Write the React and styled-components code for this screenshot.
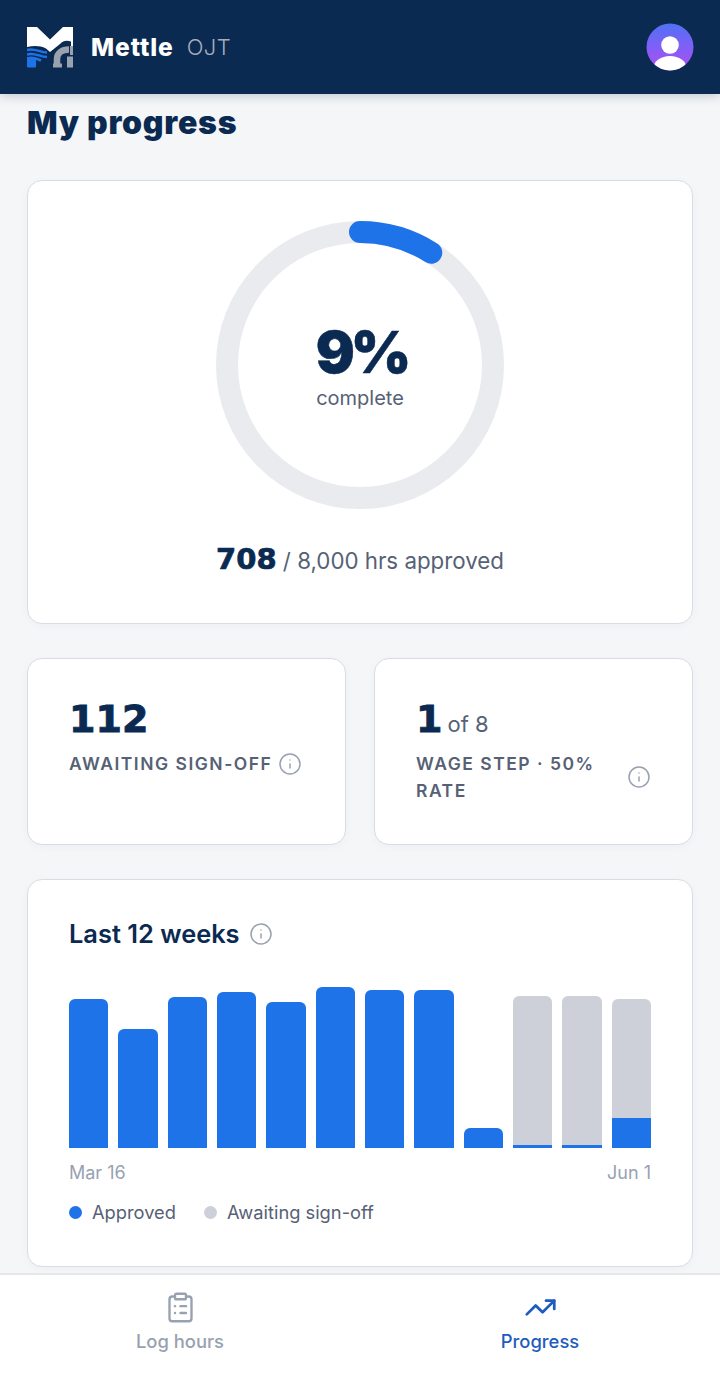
import React from 'react';
import styled, { createGlobalStyle } from 'styled-components';
import { ClipboardList, TrendingUp, Info } from 'lucide-react';

const Global = createGlobalStyle`
  html, body { margin: 0; padding: 0; background: #f6f7f9; }
  * { box-sizing: border-box; }
`;

const display = `"Inter", "Noto Sans", sans-serif`;
const numeric = `"DejaVu Sans", "Inter", sans-serif`;

const Page = styled.div`
  width: 720px; height: 1381px; display: flex; flex-direction: column; overflow: hidden;
  font-family: "Inter", sans-serif; background: #f5f6f8; color: #0b2a52;
`;
const Header = styled.header`
  height: 94px; flex: none; background: #0b2a52; display: flex; align-items: center;
  justify-content: space-between; padding: 0 26px 0 27px; box-shadow: 0 2px 10px rgba(11,42,82,.22);
  position: relative; z-index: 1;
`;
const Brand = styled.div`display: flex; align-items: center; gap: 18px;`;
const Wordmark = styled.span`font: 800 24.5px ${display}; color: #fff; letter-spacing: .9px;`;
const Product = styled.span`font: 300 22px "Inter", sans-serif; color: #a4adba; margin-left: -5px; letter-spacing: .4px;`;
const Main = styled.main`
  flex: 1; min-height: 0; overflow: hidden; padding: 9px 27px 0; display: flex; flex-direction: column;
`;
const Title = styled.h1`
  margin: 0 0 37px; font: 900 32px/40px ${display}; color: #0b2a52; letter-spacing: .75px;
`;
const Card = styled.section`
  background: #fff; border: 1px solid #d9dce2; border-radius: 15px;
  box-shadow: 0 2px 10px rgba(20,40,80,.03);
`;
const GaugeCard = styled(Card)`
  height: 444px; display: flex; flex-direction: column; align-items: center; padding-top: 40px; flex: none;
`;
const Gauge = styled.div`position: relative; width: 288px; height: 288px;`;
const GaugeCenter = styled.div`
  position: absolute; inset: 0; display: flex; flex-direction: column; align-items: center; justify-content: center;
`;
const Percent = styled.div`font: 900 58px/66px ${display}; color: #0b2a52; letter-spacing: -4px; margin-right: -3px; -webkit-text-stroke: .5px #0b2a52;`;
const Complete = styled.div`font: 400 20px/26px "Inter", sans-serif; color: #566176;`;
const Approved = styled.div`margin-top: 33px; font: 400 22.3px/34px "Inter", sans-serif; color: #566176;`;
const ApprovedNum = styled.strong`font: 700 29px/34px ${numeric}; color: #0b2a52; -webkit-text-stroke: .7px #0b2a52;`;
const StatRow = styled.div`display: grid; grid-template-columns: 1fr 1fr; gap: 28px; margin-top: 34px; flex: none;`;
const StatCard = styled(Card)`height: 187px; padding: 35px 41px;`;
const StatValue = styled.div`display: flex; align-items: baseline; gap: 5px;`;
const StatNumber = styled.span`font: 700 38px/50px ${numeric}; color: #0b2a52; -webkit-text-stroke: .9px #0b2a52;`;
const StatUnit = styled.span`font: 400 22px "Inter", sans-serif; color: #566176;`;
const StatLabel = styled.div`display: flex; align-items: center; gap: 6px; margin-top: 6px; color: #566176;`;
const LabelText = styled.span`font: 600 17.5px/27px "Inter", sans-serif; letter-spacing: 1.5px; flex: ${p => p.$grow ? 1 : 'none'};`;
const InfoIcon = styled(Info)`color: #98a1b1; flex: none;`;
const ChartCard = styled(Card)`height: 388px; margin-top: 34px; padding: 38px 41px 0; flex: none;`;
const ChartHead = styled.div`display: flex; align-items: center; gap: 9px;`;
const ChartTitle = styled.h2`margin: 0; font: 600 25.4px/32px "Inter", sans-serif; color: #0b2a52;`;
const Bars = styled.div`
  margin-top: 37px; height: 161px; display: grid; grid-template-columns: repeat(12, 1fr); column-gap: 10px; align-items: end;
`;
const Bar = styled.div`
  display: flex; flex-direction: column; justify-content: flex-end; border-radius: 6px 6px 0 0; overflow: hidden;
  background: #cdd0d8;
`;
const BarFill = styled.div`background: #1f73e8; flex: none;`;
const Axis = styled.div`
  display: flex; justify-content: space-between; margin-top: 13px; font: 400 18px/24px "Inter", sans-serif; color: #98a1b1;
`;
const Legend = styled.div`display: flex; gap: 28px; margin-top: 15px;`;
const LegendItem = styled.div`display: flex; align-items: center; gap: 10px; font: 400 18.3px/24px "Inter", sans-serif; color: #566176;`;
const Dot = styled.span`width: 13px; height: 13px; border-radius: 50%; background: ${p => p.$c};`;
const Nav = styled.nav`
  height: 108px; flex: none; background: #fff; border-top: 2px solid #e6e7ea; display: grid; grid-template-columns: 1fr 1fr;
  position: relative; z-index: 1;
`;
const NavItem = styled.div`
  display: flex; flex-direction: column; align-items: center; padding-top: 16px; gap: 5px;
  color: ${p => p.$active ? '#1f5cc0' : '#98a1b1'};
`;
const NavLabel = styled.span`font: 500 18.4px/24px "Inter", sans-serif;`;

const bars = [[149,149],[119,119],[151,151],[156,156],[146,146],[161,161],[158,158],[158,158],[20,20],[152,3],[152,3],[149,30]];

const Logo = () => (
  <svg width="46" height="41" viewBox="0 0 46 41">
    <path fill="#fff" d="M0 0H10L23 12.500 36 0H46V20H44V14.500C39 13 36 14 33 17L23 25 19 21.500C13 18.500 7 18.500 0 20Z" />
    <path fill="none" stroke="#1f73e8" strokeWidth="2.6" d="M0 23C7 20.500 13 25.500 20 25.500M0 27.500C7 25 13 30 20 30M0 31.500C5 29.500 10 31.500 14 33.500" />
    <rect x="0" y="31" width="9" height="9.500" rx="1" fill="#1f73e8" />
    <path fill="none" stroke="#9aa2ae" strokeWidth="6.500" d="M30 40V32C30 26 35 22.500 42 22.500" />
    <rect x="26" y="36.500" width="9" height="4" fill="#9aa2ae" />
    <rect x="43" y="19" width="3" height="9" fill="#9aa2ae" />
    <rect x="40" y="29.500" width="6" height="11" fill="#9aa2ae" />
  </svg>
);

const Avatar = () => (
  <svg width="48" height="48" viewBox="0 0 48 48">
    <defs>
      <linearGradient id="av" x1="0" y1="0" x2="0" y2="1">
        <stop offset="0" stopColor="#5071f5" />
        <stop offset="1" stopColor="#b04df5" />
      </linearGradient>
      <clipPath id="avc"><circle cx="24" cy="24" r="23.500" /></clipPath>
    </defs>
    <circle cx="24" cy="24" r="23.500" fill="url(#av)" />
    <circle cx="24" cy="22" r="8.800" fill="#fff" />
    <ellipse cx="24" cy="45" rx="16.500" ry="12" fill="#fff" clipPath="url(#avc)" />
  </svg>
);

export default function App() {
  return (
    <Page>
      <Global />
      <Header>
        <Brand>
          <Logo />
          <Wordmark>Mettle</Wordmark>
          <Product>OJT</Product>
        </Brand>
        <Avatar />
      </Header>
      <Main>
        <Title>My progress</Title>
        <GaugeCard>
          <Gauge>
            <svg width="288" height="288" viewBox="0 0 288 288">
              <circle cx="144" cy="144" r="133" fill="none" stroke="#e9ebef" strokeWidth="22" />
              <circle cx="144" cy="144" r="133" fill="none" stroke="#1f73e8" strokeWidth="22" strokeLinecap="round"
                strokeDasharray={`${2 * Math.PI * 133 * 0.09} ${2 * Math.PI * 133}`} transform="rotate(-90 144 144)" />
            </svg>
            <GaugeCenter>
              <Percent>9%</Percent>
              <Complete>complete</Complete>
            </GaugeCenter>
          </Gauge>
          <Approved><ApprovedNum>708</ApprovedNum> / 8,000 hrs approved</Approved>
        </GaugeCard>
        <StatRow>
          <StatCard>
            <StatValue><StatNumber>112</StatNumber></StatValue>
            <StatLabel>
              <LabelText>AWAITING SIGN-OFF</LabelText>
              <InfoIcon size={24} strokeWidth={1.5} />
            </StatLabel>
          </StatCard>
          <StatCard>
            <StatValue><StatNumber>1</StatNumber><StatUnit>of 8</StatUnit></StatValue>
            <StatLabel>
              <LabelText $grow>WAGE STEP · 50%<br />RATE</LabelText>
              <InfoIcon size={24} strokeWidth={1.5} />
            </StatLabel>
          </StatCard>
        </StatRow>
        <ChartCard>
          <ChartHead>
            <ChartTitle>Last 12 weeks</ChartTitle>
            <InfoIcon size={24} strokeWidth={1.5} />
          </ChartHead>
          <Bars>
            {bars.map(([total, fill], i) => (
              <Bar key={i} style={{ height: total }}>
                <BarFill style={{ height: fill }} />
              </Bar>
            ))}
          </Bars>
          <Axis><span>Mar 16</span><span>Jun 1</span></Axis>
          <Legend>
            <LegendItem><Dot $c="#1f73e8" />Approved</LegendItem>
            <LegendItem><Dot $c="#cdd0d8" />Awaiting sign-off</LegendItem>
          </Legend>
        </ChartCard>
      </Main>
      <Nav>
        <NavItem>
          <ClipboardList size={33} strokeWidth={1.7} />
          <NavLabel>Log hours</NavLabel>
        </NavItem>
        <NavItem $active>
          <TrendingUp size={33} strokeWidth={2} />
          <NavLabel>Progress</NavLabel>
        </NavItem>
      </Nav>
    </Page>
  );
}
